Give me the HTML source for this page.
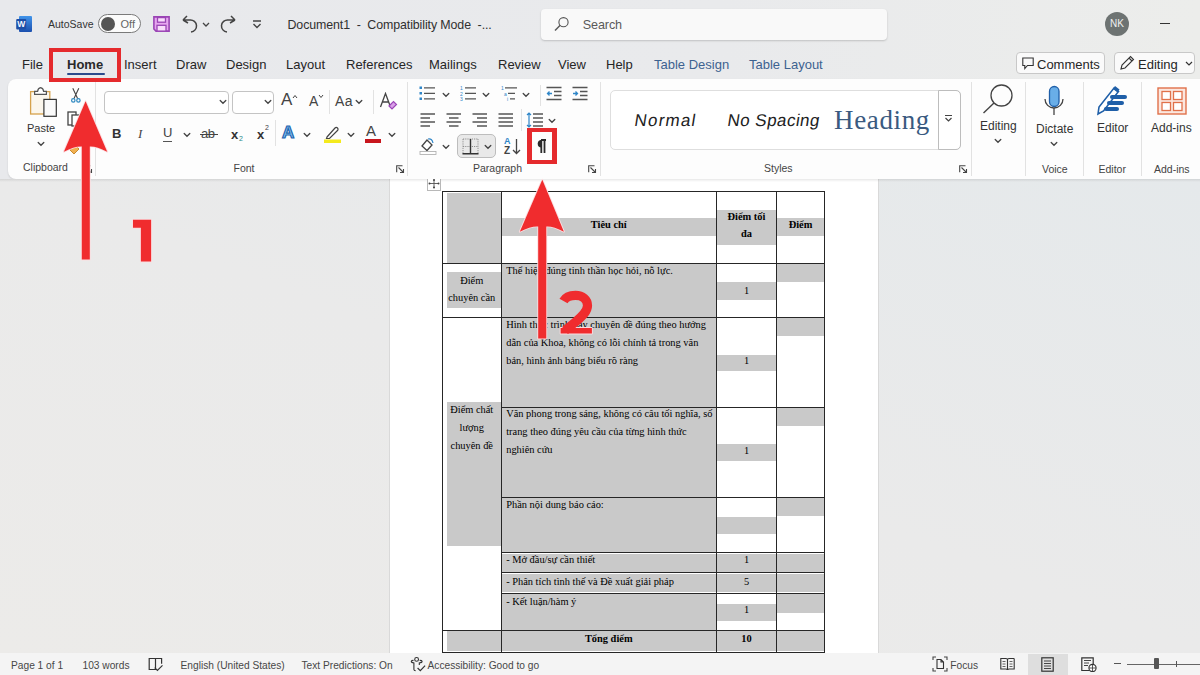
<!DOCTYPE html>
<html><head><meta charset="utf-8">
<style>
*{margin:0;padding:0;box-sizing:border-box}
html,body{width:1200px;height:675px;overflow:hidden}
body{position:relative;background:linear-gradient(to right,#e8e9ec 0%,#e9eaec 60%,#ecedeb 100%);font-family:"Liberation Sans",sans-serif;color:#242424}
.a{position:absolute;white-space:nowrap}
.t{font-size:13px;color:#262626}
.ribbon{position:absolute;left:8px;top:79px;width:1200px;height:100px;background:#fdfdfd;border-radius:8px 0 0 8px;box-shadow:0 1px 2px rgba(0,0,0,.12)}
.vd{position:absolute;width:1px;background:#e2e2e2}
.lbl{font-size:11px;color:#444}
.doc{position:absolute;left:0;top:179px;width:1200px;height:474px;background:linear-gradient(to top right,#ecebe9 0%,#eaeaea 50%,#e5e9eb 100%)}
.page{position:absolute;left:390px;top:179px;width:488px;height:474px;background:#fff;box-shadow:-1px 0 0 #d9d9d9,1px 0 0 #d9d9d9}
.status{position:absolute;left:0;top:653px;width:1200px;height:22px;background:#f4f4f4}
.st{font-size:10.2px;color:#474747;top:659.5px}
.tb{position:absolute;background:#262626}
.g{position:absolute;background:#c9c9c9}
.tx{position:absolute;font-family:"Liberation Serif",serif;font-size:10.4px;line-height:12px;color:#000;white-space:nowrap}
.chev{position:absolute}
</style></head><body>

<!-- Title bar -->
<svg class="a" style="left:16px;top:16px" width="17" height="16" viewBox="0 0 17 16">
  <defs><linearGradient id="wg" x1="0" y1="0" x2="0" y2="1"><stop offset="0" stop-color="#4194ea"/><stop offset="1" stop-color="#1b4fae"/></linearGradient></defs>
  <rect x="3" y="0" width="13" height="16" rx="1" fill="url(#wg)"/>
  <rect x="0.2" y="3" width="10" height="10.5" rx="1" fill="#1d4ea6"/>
  <text x="5.2" y="11.3" font-family="Liberation Sans" font-weight="bold" font-size="8.5" fill="#f4f8ff" text-anchor="middle">W</text>
</svg>
<div class="a t" style="left:48px;top:18px;font-size:10.5px;color:#333">AutoSave</div>
<div class="a" style="left:98px;top:14px;width:43px;height:19px;border:1px solid #7a7a7a;border-radius:10px;background:#fbfbfb"></div>
<div class="a" style="left:101px;top:17px;width:14px;height:14px;border-radius:7px;background:#555"></div>
<div class="a" style="left:120.5px;top:17.5px;font-size:11px;color:#666">Off</div>
<svg class="a" style="left:153px;top:16px" width="17" height="16" viewBox="0 0 17 16">
  <path d="M0.9 0.9 H16.1 V15.1 H3 L0.9 13 Z" fill="#e6a6ef" stroke="#9a44b5" stroke-width="1.6"/>
  <rect x="4.5" y="1.6" width="8" height="4.6" fill="#f8dcfb" stroke="#9a44b5" stroke-width="1.3"/>
  <rect x="4" y="9.3" width="9" height="5.8" fill="#f8dcfb" stroke="#9a44b5" stroke-width="1.3"/>
</svg>
<svg class="a" style="left:181px;top:14px" width="30" height="20" viewBox="0 0 30 20">
  <path d="M2 6 L6 2 M2 6 L7 9 M2 6 H9 A6 6 0 0 1 10 18" fill="none" stroke="#444" stroke-width="1.5"/>
  <path d="M22 9 l3 3 l3 -3" fill="none" stroke="#444" stroke-width="1.3"/>
</svg>
<svg class="a" style="left:219px;top:14px" width="20" height="20" viewBox="0 0 20 20">
  <path d="M16 6 L12 2 M16 6 L11 9 M16 6 H9 A6 6 0 0 0 8 18" fill="none" stroke="#444" stroke-width="1.5"/>
</svg>
<svg class="a" style="left:251px;top:18px" width="12" height="12" viewBox="0 0 12 12">
  <path d="M2 3 H10 M2.5 6 l3.5 3.5 l3.5 -3.5" fill="none" stroke="#444" stroke-width="1.4"/>
</svg>
<div class="a t" style="left:287.5px;top:17.7px;font-size:12.4px;letter-spacing:-0.1px;color:#303030">Document1&nbsp; - &nbsp;Compatibility Mode&nbsp; -...</div>

<div class="a" style="left:541px;top:9px;width:346px;height:31px;background:#f9f9f9;border-radius:4px;box-shadow:0 1px 2px rgba(0,0,0,.18)"></div>
<svg class="a" style="left:553px;top:15px" width="18" height="18" viewBox="0 0 18 18">
  <circle cx="10.5" cy="7.2" r="4.6" fill="none" stroke="#555" stroke-width="1.1"/>
  <path d="M7.2 10.3 L2 15.5" stroke="#555" stroke-width="1.4"/>
</svg>
<div class="a t" style="left:582.7px;top:18.4px;color:#5a5a5a;font-size:12.6px;letter-spacing:-0.1px">Search</div>

<div class="a" style="left:1105px;top:12px;width:24px;height:24px;border-radius:12px;background:#6d7372;color:#f0f0f0;font-size:10px;line-height:24px;text-align:center">NK</div>
<div class="a" style="left:1160px;top:23px;width:10px;height:1px;background:#333"></div>

<!-- Tabs -->
<div class="a t" style="left:22px;top:56.6px">File</div>
<div class="a t" style="left:67px;top:56.6px;font-weight:bold;color:#2a2a2a">Home</div>
<div class="a" style="left:67px;top:73px;width:38px;height:2px;background:#2a4b8d;border-radius:1px"></div>
<div class="a t" style="left:124px;top:56.6px">Insert</div>
<div class="a t" style="left:176px;top:56.6px">Draw</div>
<div class="a t" style="left:226px;top:56.6px">Design</div>
<div class="a t" style="left:286px;top:56.6px">Layout</div>
<div class="a t" style="left:346px;top:56.6px">References</div>
<div class="a t" style="left:429px;top:56.6px">Mailings</div>
<div class="a t" style="left:498px;top:56.6px">Review</div>
<div class="a t" style="left:558px;top:56.6px">View</div>
<div class="a t" style="left:606px;top:56.6px">Help</div>
<div class="a t" style="left:654px;top:56.6px;color:#3d6290">Table Design</div>
<div class="a t" style="left:749px;top:56.6px;color:#3d6290">Table Layout</div>

<div class="a" style="left:1016px;top:52px;width:89px;height:22px;border:1px solid #c8c8c8;border-radius:4px;background:#fafafa"></div>
<svg class="a" style="left:1022px;top:57px" width="12" height="13" viewBox="0 0 12 13"><path d="M0.8 1 H11.2 V8.5 H5.5 L2.8 11.5 V8.5 H0.8 Z" fill="none" stroke="#333" stroke-width="1.1"/></svg>
<div class="a t" style="left:1037px;top:56.6px">Comments</div>
<div class="a" style="left:1114px;top:52px;width:81px;height:22px;border:1px solid #c8c8c8;border-radius:4px;background:#fafafa"></div>
<svg class="a" style="left:1119px;top:55px" width="16" height="16" viewBox="0 0 16 16"><path d="M2 14 L3 10 L11.5 1.5 L14.5 4.5 L6 13 Z M10 3 L13 6" fill="none" stroke="#333" stroke-width="1.1"/></svg>
<div class="a t" style="left:1138px;top:56.6px">Editing</div>
<svg class="a" style="left:1185px;top:61px" width="8" height="6" viewBox="0 0 8 6"><path d="M1 1 l3 3 l3 -3" fill="none" stroke="#333" stroke-width="1.2"/></svg>

<!-- Ribbon -->
<div class="ribbon"></div>
<svg width="0" height="0" style="position:absolute">
 <defs>
  <symbol id="chv" viewBox="0 0 8 6"><path d="M1.2 1.5 L4 4.3 L6.8 1.5" fill="none" stroke="#444" stroke-width="1.3" stroke-linecap="round"/></symbol>
  <symbol id="launch" viewBox="0 0 9 8"><path d="M0.6 0.6 H8.4 V7.4 H0.6 Z" fill="none" stroke="#666" stroke-width="0" /><path d="M0.7 7.3 V0.7 H6.5 M2.5 2.5 L7.5 7.5 M7.5 4 V7.5 H4" fill="none" stroke="#444" stroke-width="1.1"/></symbol>
 </defs>
</svg>
<!-- Clipboard -->
<svg class="a" style="left:20px;top:80px" width="45" height="45" viewBox="20 80 45 45">
  <rect x="30.6" y="91.6" width="19.2" height="22.4" fill="#fbf6ec" stroke="#d6a24c" stroke-width="1.3"/>
  <path d="M34.6 94.3 V91.4 H37.6 Q38 88 40.6 87.6 Q43.2 88 43.6 91.4 H46.4 V94.3 Z" fill="#fff" stroke="#555" stroke-width="1.2"/>
  <rect x="43.9" y="99.4" width="12.4" height="16.9" fill="#fafafa" stroke="#333" stroke-width="1.2"/>
</svg>
<div class="a" style="left:27px;top:122px;font-size:11px;color:#333">Paste</div>
<svg class="a" style="left:37px;top:141px" width="8" height="6"><use href="#chv"/></svg>
<svg class="a" style="left:68px;top:85px" width="15" height="20" viewBox="68 85 15 20">
  <path d="M72.8 88.2 L77.6 98.6 M78.8 88.2 L74 98.6" stroke="#444" stroke-width="1.1" fill="none"/>
  <circle cx="73.3" cy="100.4" r="1.7" fill="none" stroke="#2e88c0" stroke-width="1.2"/>
  <circle cx="78.4" cy="100.4" r="1.7" fill="none" stroke="#2e88c0" stroke-width="1.2"/>
</svg>
<svg class="a" style="left:67px;top:111px" width="14" height="16" viewBox="0 0 14 16">
  <rect x="1" y="1" width="8" height="13" fill="#fff" stroke="#444" stroke-width="1.3"/>
  <rect x="5" y="4" width="8" height="11" fill="#fff" stroke="#444" stroke-width="1.3"/>
</svg>
<svg class="a" style="left:68px;top:140px" width="13" height="15" viewBox="0 0 13 15">
  <path d="M2 10 L6 14 L11 9 L7 5 Z" fill="#f0b050" stroke="#c88a30" stroke-width="1"/>
</svg>
<div class="a lbl" style="left:23px;top:161px;font-size:10.5px">Clipboard</div>
<svg class="a" style="left:84px;top:165px" width="9" height="8"><use href="#launch"/></svg>
<div class="vd" style="left:95px;top:82px;height:94px"></div>

<!-- Font group -->
<div class="a" style="left:104px;top:91px;width:125px;height:23px;border:1px solid #c4c4c4;border-radius:4px;background:#fff"></div>
<svg class="a" style="left:219px;top:99px" width="8" height="6"><use href="#chv"/></svg>
<div class="a" style="left:231.5px;top:91px;width:42px;height:23px;border:1px solid #c4c4c4;border-radius:4px;background:#fff"></div>
<svg class="a" style="left:264px;top:99px" width="8" height="6"><use href="#chv"/></svg>
<div class="a" style="left:281px;top:90px;font-size:17px;color:#444">A</div>
<svg class="a" style="left:292px;top:94px" width="6" height="5" viewBox="0 0 6 5"><path d="M1 4 L3 1.5 L5 4" fill="none" stroke="#444" stroke-width="1"/></svg>
<div class="a" style="left:309px;top:93px;font-size:14px;color:#444">A</div>
<svg class="a" style="left:318px;top:94px" width="6" height="5" viewBox="0 0 6 5"><path d="M1 1 L3 3.5 L5 1" fill="none" stroke="#444" stroke-width="1"/></svg>
<div class="vd" style="left:328.5px;top:90px;height:24px"></div>
<div class="a" style="left:335px;top:93px;font-size:14px;color:#444;letter-spacing:0.5px">Aa</div>
<svg class="a" style="left:355px;top:99px" width="8" height="6"><use href="#chv"/></svg>
<div class="vd" style="left:373px;top:90px;height:24px"></div>
<svg class="a" style="left:379px;top:92px" width="19" height="18" viewBox="0 0 19 18">
  <path d="M1.5 15 L6.5 1.5 L11.5 15 M3.5 10 H9.5" fill="none" stroke="#444" stroke-width="1.3"/>
  <path d="M10 14 L14.5 9.5 L17.5 12.5 L13 17 Z" fill="#d9a0e8" stroke="#9b45b8" stroke-width="1.2"/>
</svg>

<div class="a" style="left:112px;top:126px;font-size:13px;font-weight:bold;color:#333">B</div>
<div class="a" style="left:138px;top:126px;font-size:13px;font-style:italic;font-family:'Liberation Serif',serif;color:#444">I</div>
<div class="a" style="left:163px;top:125px;font-size:13px;color:#444">U</div>
<div class="a" style="left:163px;top:140.5px;width:9px;height:1px;background:#555"></div>
<svg class="a" style="left:183px;top:132px" width="8" height="6"><use href="#chv"/></svg>
<div class="a" style="left:201px;top:126px;font-size:13px;color:#444;letter-spacing:-0.5px">ab</div>
<div class="a" style="left:200px;top:134px;width:18px;height:1px;background:#444"></div>
<div class="a" style="left:231px;top:127px;font-size:13px;color:#333;font-weight:bold">x</div>
<div class="a" style="left:239px;top:135px;font-size:7px;color:#2a8a8a">2</div>
<div class="a" style="left:257px;top:127px;font-size:13px;color:#333;font-weight:bold">x</div>
<div class="a" style="left:265px;top:124px;font-size:7px;color:#444">2</div>
<div class="vd" style="left:275px;top:120px;height:26px"></div>
<div class="a" style="left:282px;top:122.5px;font-size:17px;font-weight:bold;color:#8cc4f0;-webkit-text-stroke:1.2px #1f66b0">A</div>
<svg class="a" style="left:303px;top:132px" width="8" height="6"><use href="#chv"/></svg>
<svg class="a" style="left:323px;top:125px" width="19" height="19" viewBox="0 0 19 19">
  <path d="M4 12 L12 3 A1.6 1.6 0 0 1 14.5 5.5 L6.5 13.5 L3.5 13.5 Z" fill="#fff" stroke="#444" stroke-width="1.2"/>
  <rect x="1" y="14.5" width="17" height="3.5" fill="#f4ea1d"/>
</svg>
<svg class="a" style="left:347px;top:132px" width="8" height="6"><use href="#chv"/></svg>
<div class="a" style="left:366px;top:122px;font-size:15px;color:#444">A</div>
<div class="a" style="left:365px;top:139px;width:16px;height:3.5px;background:#c8161e"></div>
<svg class="a" style="left:388px;top:132px" width="8" height="6"><use href="#chv"/></svg>
<div class="a lbl" style="left:233.5px;top:161.5px;font-size:10.5px">Font</div>
<svg class="a" style="left:396px;top:165px" width="9" height="8"><use href="#launch"/></svg>
<div class="vd" style="left:407px;top:82px;height:94px"></div>

<!-- Paragraph group -->
<svg class="a" style="left:419px;top:86px" width="17" height="15" viewBox="0 0 17 15">
  <g fill="#2f86c8"><rect x="0.5" y="0.5" width="2.5" height="2.5"/><rect x="0.5" y="6" width="2.5" height="2.5"/><rect x="0.5" y="11.5" width="2.5" height="2.5"/></g>
  <g stroke="#555" stroke-width="1.3"><path d="M5 1.8 H16 M5 7.3 H16 M5 12.8 H16"/></g>
</svg>
<svg class="a" style="left:442px;top:92px" width="8" height="6"><use href="#chv"/></svg>
<svg class="a" style="left:460px;top:86px" width="17" height="15" viewBox="0 0 17 15">
  <g font-family="Liberation Sans" font-size="5" fill="#2f86c8"><text x="0" y="4">1</text><text x="0" y="9.5">2</text><text x="0" y="15">3</text></g>
  <g stroke="#555" stroke-width="1.3"><path d="M5 1.8 H16 M5 7.3 H16 M5 12.8 H16"/></g>
</svg>
<svg class="a" style="left:482px;top:92px" width="8" height="6"><use href="#chv"/></svg>
<svg class="a" style="left:501px;top:86px" width="17" height="15" viewBox="0 0 17 15">
  <g font-family="Liberation Sans" font-size="5" fill="#2f86c8"><text x="0" y="4">1</text><text x="3" y="9.5">a</text><text x="6" y="15">i</text></g>
  <g stroke="#555" stroke-width="1.3"><path d="M4 1.8 H16 M7 7.3 H14 M9 12.8 H14"/></g>
</svg>
<svg class="a" style="left:522px;top:92px" width="8" height="6"><use href="#chv"/></svg>
<div class="vd" style="left:540px;top:85px;height:21px"></div>
<svg class="a" style="left:546px;top:86px" width="16" height="15" viewBox="0 0 16 15">
  <g stroke="#555" stroke-width="1.3"><path d="M0.5 1.5 H15.5 M8 5.5 H15.5 M8 9.5 H15.5 M0.5 13.5 H15.5"/></g>
  <path d="M6 7.5 H1.5 M3.5 5.5 L1.5 7.5 L3.5 9.5" fill="none" stroke="#2f86c8" stroke-width="1.3"/>
</svg>
<svg class="a" style="left:572px;top:86px" width="16" height="15" viewBox="0 0 16 15">
  <g stroke="#555" stroke-width="1.3"><path d="M0.5 1.5 H15.5 M8 5.5 H15.5 M8 9.5 H15.5 M0.5 13.5 H15.5"/></g>
  <path d="M1 7.5 H5.5 M3.5 5.5 L5.5 7.5 L3.5 9.5" fill="none" stroke="#2f86c8" stroke-width="1.3"/>
</svg>

<svg class="a" style="left:420px;top:113px" width="16" height="14" viewBox="0 0 16 14">
  <g stroke="#555" stroke-width="1.4"><path d="M0.5 1 H15 M0.5 5 H10 M0.5 9 H15 M0.5 13 H10"/></g></svg>
<svg class="a" style="left:446px;top:113px" width="16" height="14" viewBox="0 0 16 14">
  <g stroke="#555" stroke-width="1.4"><path d="M0.5 1 H15 M3 5 H12.5 M0.5 9 H15 M3 13 H12.5"/></g></svg>
<svg class="a" style="left:472px;top:113px" width="16" height="14" viewBox="0 0 16 14">
  <g stroke="#555" stroke-width="1.4"><path d="M0.5 1 H15 M5 5 H15 M0.5 9 H15 M5 13 H15"/></g></svg>
<svg class="a" style="left:498px;top:113px" width="16" height="14" viewBox="0 0 16 14">
  <g stroke="#555" stroke-width="1.4"><path d="M0.5 1 H15 M0.5 5 H15 M0.5 9 H15 M0.5 13 H15"/></g></svg>
<div class="vd" style="left:520.5px;top:109px;height:22px"></div>
<svg class="a" style="left:526px;top:112px" width="18" height="16" viewBox="0 0 18 16">
  <g stroke="#555" stroke-width="1.4"><path d="M7 2 H17 M7 6 H17 M7 10 H17 M7 14 H17"/></g>
  <path d="M3 1 V15 M1 3 L3 1 L5 3 M1 13 L3 15 L5 13" fill="none" stroke="#2f86c8" stroke-width="1.2"/>
</svg>
<svg class="a" style="left:548px;top:118px" width="8" height="6"><use href="#chv"/></svg>

<svg class="a" style="left:419px;top:137px" width="18" height="18" viewBox="0 0 18 18">
  <path d="M3 9 L8 3 L13 8 L8 13.5 Z" fill="#fff" stroke="#444" stroke-width="1.3"/>
  <path d="M9 2 Q13 1 14 6" fill="none" stroke="#2f86c8" stroke-width="1.2"/>
  <rect x="1" y="14.5" width="16" height="3" fill="#fff" stroke="#aaa" stroke-width="0.8"/>
</svg>
<svg class="a" style="left:442px;top:144px" width="8" height="6"><use href="#chv"/></svg>
<div class="a" style="left:457px;top:134px;width:39px;height:24px;border:1px solid #bdbdbd;border-radius:5px;background:#e9e9e9"></div>
<svg class="a" style="left:462px;top:138px" width="17" height="17" viewBox="0 0 17 17">
  <path d="M1 1 H16 M1 1 V16 M16 1 V16 M1 8.5 H16 M8.5 1 V16" fill="none" stroke="#888" stroke-width="0.9" stroke-dasharray="1.2 1"/>
  <path d="M0.5 15.8 H16.5 M8.5 1 V15.8" stroke="#333" stroke-width="1.4"/>
</svg>
<svg class="a" style="left:484px;top:144px" width="8" height="6"><use href="#chv"/></svg>
<div class="a" style="left:504px;top:137px;font-size:9px;font-weight:bold;color:#2f86c8;line-height:9px">A</div>
<div class="a" style="left:504px;top:146px;font-size:10px;font-weight:bold;color:#444;line-height:10px">Z</div>
<svg class="a" style="left:512px;top:138px" width="9" height="17" viewBox="0 0 9 17">
  <path d="M4.5 1 V15.5 M1 12 L4.5 15.5 L8 12" fill="none" stroke="#444" stroke-width="1.3"/>
</svg>
<svg class="a" style="left:535px;top:139px" width="12" height="15" viewBox="0 0 12 15"><path d="M6 1 H11 M6.3 1 V14 M9.5 1 V14" stroke="#2a2a2a" stroke-width="1.8" fill="none"/><path d="M6.5 1 A3.6 3.6 0 0 0 6.5 8.6 Z" fill="#2a2a2a"/></svg>
<div class="a lbl" style="left:473px;top:161.5px;font-size:10.5px">Paragraph</div>
<svg class="a" style="left:588px;top:165px" width="9" height="8"><use href="#launch"/></svg>
<div class="vd" style="left:600px;top:82px;height:94px"></div>

<!-- Styles -->
<div class="a" style="left:609.5px;top:89.5px;width:351px;height:60px;border:1px solid #dedede;border-radius:5px;background:#fff"></div>
<div class="a" style="left:937.5px;top:89.5px;width:23px;height:60px;border:1px solid #bdbdbd;border-radius:0 5px 5px 0;background:#fff"></div>
<svg class="a" style="left:944px;top:114px" width="9" height="9" viewBox="0 0 9 9"><path d="M1 1.5 H8 M1.5 4 L4.5 7 L7.5 4" fill="none" stroke="#444" stroke-width="1.2"/></svg>
<div class="a" style="left:632.5px;top:111.4px;font-size:17px;color:#222;letter-spacing:1.2px;transform:skewX(-9deg);transform-origin:0 100%">Normal</div>
<div class="a" style="left:725.5px;top:111.4px;font-size:17px;color:#222;letter-spacing:0.45px;transform:skewX(-9deg);transform-origin:0 100%">No Spacing</div>
<div class="a" style="left:834px;top:105.1px;font-size:27px;font-family:'Liberation Serif',serif;color:#3a5a80;letter-spacing:0.65px">Heading</div>
<div class="a lbl" style="left:764px;top:161.5px;font-size:10.5px">Styles</div>
<svg class="a" style="left:959px;top:165px" width="9" height="8"><use href="#launch"/></svg>
<div class="vd" style="left:971px;top:82px;height:94px"></div>

<!-- Editing -->
<svg class="a" style="left:982px;top:83px" width="32" height="32" viewBox="0 0 32 32">
  <circle cx="19.5" cy="12.5" r="10.5" fill="none" stroke="#444" stroke-width="1.3"/>
  <path d="M12 20 L1.5 30" stroke="#444" stroke-width="1.4"/>
</svg>
<div class="a" style="left:980px;top:119px;font-size:12px;color:#333">Editing</div>
<svg class="a" style="left:994px;top:138px" width="8" height="6"><use href="#chv"/></svg>
<div class="vd" style="left:1025px;top:82px;height:94px"></div>

<!-- Voice -->
<svg class="a" style="left:1043px;top:85px" width="22" height="32" viewBox="0 0 22 32">
  <rect x="6.5" y="1.5" width="9.5" height="20" rx="4.75" fill="#69aee8" stroke="#1f5fa8" stroke-width="1.3"/>
  <path d="M2 14 A9 9 0 0 0 20 14" fill="none" stroke="#444" stroke-width="1.3"/>
  <path d="M11 23 V30" stroke="#444" stroke-width="1.3"/>
</svg>
<div class="a" style="left:1036px;top:122px;font-size:12px;color:#333">Dictate</div>
<svg class="a" style="left:1050px;top:141px" width="8" height="6"><use href="#chv"/></svg>
<div class="a lbl" style="left:1042px;top:162.5px;font-size:10.5px">Voice</div>
<div class="vd" style="left:1083px;top:82px;height:94px"></div>

<!-- Editor -->
<svg class="a" style="left:1096px;top:84px" width="32" height="32" viewBox="0 0 32 32">
  <path d="M2 30 L3 23 L18 4 L22.5 7.5 L7.5 27 Z" fill="#fff" stroke="#1f5fa8" stroke-width="1.6"/>
  <path d="M17 5 L19 2 L23.5 5.5 L21.5 8.5" fill="#1f5fa8"/>
  <rect x="14" y="11" width="17" height="4" rx="2" fill="#1f5fa8"/>
  <rect x="11" y="17" width="17" height="4" rx="2" fill="#1f5fa8"/>
  <rect x="8" y="23" width="15" height="4" rx="2" fill="#1f5fa8"/>
</svg>
<div class="a" style="left:1097px;top:120.5px;font-size:12px;color:#333">Editor</div>
<div class="a lbl" style="left:1098.5px;top:162.5px;font-size:10.5px">Editor</div>
<div class="vd" style="left:1140.5px;top:82px;height:94px"></div>

<!-- Add-ins -->
<svg class="a" style="left:1157px;top:87px" width="30" height="28" viewBox="0 0 30 28">
  <rect x="1" y="1" width="28" height="26" fill="#fbe7df" stroke="#e0714a" stroke-width="1.4"/>
  <rect x="5" y="4.5" width="8.5" height="8" fill="#fff" stroke="#e0714a" stroke-width="1.3"/>
  <rect x="16.5" y="4.5" width="8.5" height="8" fill="#fff" stroke="#e0714a" stroke-width="1.3"/>
  <rect x="5" y="15.5" width="8.5" height="8" fill="#fff" stroke="#e0714a" stroke-width="1.3"/>
  <rect x="16.5" y="15.5" width="8.5" height="8" fill="#fff" stroke="#e0714a" stroke-width="1.3"/>
</svg>
<div class="a" style="left:1151px;top:120.5px;font-size:12px;color:#333">Add-ins</div>
<div class="a lbl" style="left:1154px;top:162.5px;font-size:10.5px">Add-ins</div>


<!-- Document area -->
<div class="doc"></div>
<div class="page"></div>
<div class="a" style="left:0;top:179px;width:1200px;height:3px;background:linear-gradient(rgba(0,0,0,.09),rgba(0,0,0,0))"></div>
<div class="g" style="left:447.0px;top:192.5px;width:53.5px;height:70.1px"></div>
<div class="g" style="left:501.5px;top:218.3px;width:214.5px;height:17.7px"></div>
<div class="g" style="left:717.0px;top:209.6px;width:59.0px;height:35.0px"></div>
<div class="g" style="left:777.0px;top:218.3px;width:47.0px;height:17.7px"></div>
<div class="g" style="left:447.0px;top:272.3px;width:53.5px;height:36.0px"></div>
<div class="g" style="left:501.5px;top:263.5px;width:214.5px;height:53.5px"></div>
<div class="g" style="left:717.0px;top:282.0px;width:59.0px;height:18.0px"></div>
<div class="g" style="left:777.0px;top:263.5px;width:47.0px;height:18.0px"></div>
<div class="g" style="left:501.5px;top:318.0px;width:214.5px;height:88.5px"></div>
<div class="g" style="left:501.5px;top:407.5px;width:214.5px;height:89.5px"></div>
<div class="g" style="left:501.5px;top:498.0px;width:214.5px;height:53.5px"></div>
<div class="g" style="left:501.5px;top:594.0px;width:214.5px;height:35.5px"></div>
<div class="g" style="left:501.5px;top:553.5px;width:214.5px;height:18.0px"></div>
<div class="g" style="left:501.5px;top:573.5px;width:214.5px;height:18.5px"></div>
<div class="g" style="left:447.0px;top:402.4px;width:53.5px;height:143.6px"></div>
<div class="g" style="left:717.0px;top:355.0px;width:59.0px;height:16.3px"></div>
<div class="g" style="left:777.0px;top:318.0px;width:47.0px;height:17.6px"></div>
<div class="g" style="left:717.0px;top:444.0px;width:59.0px;height:16.5px"></div>
<div class="g" style="left:777.0px;top:407.5px;width:47.0px;height:18.3px"></div>
<div class="g" style="left:717.0px;top:516.5px;width:59.0px;height:17.5px"></div>
<div class="g" style="left:777.0px;top:498.0px;width:47.0px;height:17.6px"></div>
<div class="g" style="left:717.0px;top:553.5px;width:59.0px;height:18.0px"></div>
<div class="g" style="left:777.0px;top:553.5px;width:47.0px;height:18.0px"></div>
<div class="g" style="left:717.0px;top:573.5px;width:59.0px;height:18.5px"></div>
<div class="g" style="left:777.0px;top:573.5px;width:47.0px;height:18.5px"></div>
<div class="g" style="left:717.0px;top:603.5px;width:59.0px;height:17.5px"></div>
<div class="g" style="left:777.0px;top:594.0px;width:47.0px;height:18.6px"></div>
<div class="g" style="left:447.0px;top:630.5px;width:53.5px;height:20.0px"></div>
<div class="g" style="left:501.5px;top:630.5px;width:214.5px;height:20.0px"></div>
<div class="g" style="left:717.0px;top:630.5px;width:59.0px;height:20.0px"></div>
<div class="g" style="left:777.0px;top:630.5px;width:47.0px;height:20.0px"></div>
<div class="tb" style="left:442px;top:191px;width:1px;height:462px"></div>
<div class="tb" style="left:501px;top:191px;width:1px;height:462px"></div>
<div class="tb" style="left:716px;top:191px;width:1px;height:462px"></div>
<div class="tb" style="left:776px;top:191px;width:1px;height:462px"></div>
<div class="tb" style="left:824px;top:191px;width:1px;height:462px"></div>
<div class="tb" style="left:442px;top:191px;width:383px;height:1px"></div>
<div class="tb" style="left:442px;top:263px;width:383px;height:1px"></div>
<div class="tb" style="left:442px;top:317px;width:383px;height:1px"></div>
<div class="tb" style="left:501px;top:407px;width:324px;height:1px"></div>
<div class="tb" style="left:501px;top:497px;width:324px;height:1px"></div>
<div class="tb" style="left:501px;top:552px;width:324px;height:1px"></div>
<div class="tb" style="left:501px;top:572px;width:324px;height:1px"></div>
<div class="tb" style="left:501px;top:593px;width:324px;height:1px"></div>
<div class="tb" style="left:442px;top:630px;width:383px;height:1px"></div>
<div class="tb" style="left:442px;top:652px;width:383px;height:1px"></div>
<div class="tx" style="top:219.3px;left:501.0px;width:215.5px;text-align:center;font-weight:bold;">Tiêu chí</div>
<div class="tx" style="top:210.6px;left:716.5px;width:60.0px;text-align:center;font-weight:bold;">Điểm tối</div>
<div class="tx" style="top:227.7px;left:716.5px;width:60.0px;text-align:center;font-weight:bold;">đa</div>
<div class="tx" style="top:219.3px;left:776.5px;width:48.0px;text-align:center;font-weight:bold;">Điểm</div>
<div class="tx" style="top:275.0px;left:442.5px;width:58.5px;text-align:center;">Điểm</div>
<div class="tx" style="top:292.0px;left:442.5px;width:58.5px;text-align:center;">chuyên cần</div>
<div class="tx" style="top:264.8px;left:506.2px;">Thể hiện đúng tinh thần học hỏi, nỗ lực.</div>
<div class="tx" style="top:284.5px;left:716.5px;width:60.0px;text-align:center;">1</div>
<div class="tx" style="top:318.8px;left:506.2px;">Hình thức trình bày chuyên đề đúng theo hướng</div>
<div class="tx" style="top:336.8px;left:506.2px;">dẫn của Khoa, không có lỗi chính tả trong văn</div>
<div class="tx" style="top:354.6px;left:506.2px;">bản, hình ảnh bảng biểu rõ ràng</div>
<div class="tx" style="top:355.0px;left:716.5px;width:60.0px;text-align:center;">1</div>
<div class="tx" style="top:403.5px;left:442.5px;width:58.5px;text-align:center;">Điểm chất</div>
<div class="tx" style="top:421.9px;left:442.5px;width:58.5px;text-align:center;">lượng</div>
<div class="tx" style="top:439.7px;left:442.5px;width:58.5px;text-align:center;">chuyên đề</div>
<div class="tx" style="top:408.0px;left:506.2px;">Văn phong trong sáng, không có câu tối nghĩa, số</div>
<div class="tx" style="top:426.0px;left:506.2px;">trang theo đúng yêu cầu của từng hình thức</div>
<div class="tx" style="top:444.0px;left:506.2px;">nghiên cứu</div>
<div class="tx" style="top:445.0px;left:716.5px;width:60.0px;text-align:center;">1</div>
<div class="tx" style="top:499.0px;left:506.2px;">Phần nội dung báo cáo:</div>
<div class="tx" style="top:554.4px;left:506.2px;">- Mở đầu/sự cần thiết</div>
<div class="tx" style="top:554.4px;left:716.5px;width:60.0px;text-align:center;">1</div>
<div class="tx" style="top:575.6px;left:506.2px;">- Phân tích tình thế và Đề xuất giải pháp</div>
<div class="tx" style="top:575.6px;left:716.5px;width:60.0px;text-align:center;">5</div>
<div class="tx" style="top:595.5px;left:506.2px;">- Kết luận/hàm ý</div>
<div class="tx" style="top:604.0px;left:716.5px;width:60.0px;text-align:center;">1</div>
<div class="tx" style="top:633.0px;left:501.0px;width:215.5px;text-align:center;font-weight:bold;">Tổng điểm</div>
<div class="tx" style="top:633.0px;left:716.5px;width:60.0px;text-align:center;font-weight:bold;">10</div>

<!-- Status bar -->
<div class="status"></div>
<div class="a st" style="left:11px">Page 1 of 1</div>
<div class="a st" style="left:82.5px">103 words</div>
<div class="a st" style="left:180.5px">English (United States)</div>
<div class="a st" style="left:301.5px">Text Predictions: On</div>
<div class="a st" style="left:427.5px">Accessibility: Good to go</div>
<div class="a st" style="left:950.3px">Focus</div>

<!-- table move handle -->
<div class="a" style="left:427px;top:179px;width:14px;height:11.5px;border:1px solid #b8b8b8;border-top:none;background:#fff"></div>
<svg class="a" style="left:428px;top:179px" width="12" height="10" viewBox="0 0 12 10">
  <path d="M6 0.5 V9 M1.5 4.5 H10.5" stroke="#555" stroke-width="0.9"/>
  <circle cx="6" cy="1" r="1" fill="#444"/><circle cx="6" cy="8.5" r="1" fill="#444"/><circle cx="1.5" cy="4.5" r="1" fill="#444"/><circle cx="10.5" cy="4.5" r="1" fill="#444"/>
</svg>

<!-- status bar icons -->
<svg class="a" style="left:145px;top:654px" width="20" height="20" viewBox="145 654 20 20">
  <path d="M149.2 658.5 H155.5 V669.5 H149.2 Z M155.5 658.5 H161.6 V663.8" fill="none" stroke="#333" stroke-width="1.2"/>
  <path d="M154.7 667.6 L157.4 670.4 L162.5 665.4" fill="none" stroke="#333" stroke-width="1.2"/>
</svg>
<svg class="a" style="left:408px;top:654px" width="20" height="20" viewBox="408 654 20 20">
  <circle cx="416.6" cy="659.4" r="1.9" fill="none" stroke="#333" stroke-width="1.1"/>
  <path d="M413.5 660.4 L411.8 660.6 Q410.8 661.6 411.8 662.4 L413.9 663 V669.5 Q414 670.6 415.6 670.6 M419.7 660.4 L421.6 660.6 Q422.6 661.6 421.6 662.4 L419.3 663 V665" fill="none" stroke="#333" stroke-width="1.1"/>
  <path d="M417.6 668 L420.3 670.6 L425.1 665.6" fill="none" stroke="#333" stroke-width="1.2"/>
</svg>
<svg class="a" style="left:932px;top:656px" width="16" height="16" viewBox="0 0 16 16">
  <path d="M1 4 V1 H4 M12 1 H15 V4 M15 12 V15 H12 M4 15 H1 V12" fill="none" stroke="#444" stroke-width="1.1"/>
  <path d="M5 3.5 H9 L11.5 6 V12.5 H5 Z M9 3.5 V6 H11.5" fill="none" stroke="#333" stroke-width="1.1"/>
</svg>
<svg class="a" style="left:1000px;top:657px" width="15" height="14" viewBox="0 0 15 14">
  <path d="M0.8 1.5 H6 Q7.5 1.5 7.5 3 V13 Q7.5 12 6 12 H0.8 Z M14.2 1.5 H9 Q7.5 1.5 7.5 3 M7.5 13 Q7.5 12 9 12 H14.2 V1.5" fill="none" stroke="#333" stroke-width="1.1"/>
  <path d="M2.5 4.5 H5.5 M2.5 7 H5.5 M2.5 9.5 H5.5 M9.5 4.5 H12.5 M9.5 7 H12.5 M9.5 9.5 H12.5" stroke="#555" stroke-width="0.9"/>
</svg>
<div class="a" style="left:1028px;top:653.5px;width:40px;height:21.5px;background:#dedede"></div>
<svg class="a" style="left:1041px;top:657px" width="13" height="15" viewBox="0 0 13 15">
  <rect x="0.8" y="0.8" width="11.4" height="13.4" fill="none" stroke="#333" stroke-width="1.2"/>
  <path d="M3 4 H10 M3 6.5 H10 M3 9 H10 M3 11.5 H10" stroke="#444" stroke-width="1"/>
</svg>
<svg class="a" style="left:1081px;top:657px" width="16" height="15" viewBox="0 0 16 15">
  <path d="M9 13.5 H0.8 V0.8 H12.2 V7" fill="none" stroke="#333" stroke-width="1.2"/>
  <path d="M3 3.5 H10 M3 6 H8 M3 8.5 H7" stroke="#444" stroke-width="1"/>
  <circle cx="11.5" cy="11" r="3.6" fill="#fff" stroke="#333" stroke-width="1.1"/>
  <path d="M8 11 H15 M11.5 7.5 V14.5" stroke="#333" stroke-width="0.8"/>
</svg>
<div class="a" style="left:1113.5px;top:663px;width:7px;height:1px;background:#555"></div>
<div class="a" style="left:1126.5px;top:663.5px;width:74px;height:1.2px;background:#666"></div>
<div class="a" style="left:1153.5px;top:658px;width:5px;height:11px;background:#555;border-radius:1px"></div>
<div class="a" style="left:1176px;top:661px;width:1px;height:6px;background:#555"></div>

<!-- red annotations -->
<div class="a" style="left:49.2px;top:48.3px;width:72.3px;height:33.4px;border:4.6px solid #e52a2d"></div>
<div class="a" style="left:526.7px;top:128.1px;width:30.3px;height:35.8px;border-style:solid;border-color:#e52a2d;border-width:4px 5px"></div>
<svg class="a" style="left:0;top:0" width="1200" height="675" viewBox="0 0 1200 675">
  <g fill="#f02c2e" stroke="#fbdde0" stroke-width="1.8" stroke-linejoin="round" paint-order="stroke">
    <path d="M85.6 101.3 L107.2 151.7 Q96 146 89.8 146.5 V259.5 H81.8 V146.5 Q75 146 63.9 151.7 Z"/>
    <path d="M542.3 179.8 L563.9 231.7 Q553 226 546.3 226.5 V338.5 H538.2 V226.5 Q531 226 519.8 231.7 Z"/>
    <path d="M133 219.8 H151.1 V261.6 H140.9 V227.8 H133 Z"/>
    <rect x="560.6" y="328" width="31.3" height="5.5"/>
  </g>
  <path d="M563.5 301 C566 296.5 570.5 295.3 575.5 295.3 C582.5 295.3 587.5 299.5 587.5 305.5 C587.5 311 583 315.5 576 321.5 L565 330.5" fill="none" stroke="#f02c2e" stroke-width="9.2"/>
</svg>

</body></html>
